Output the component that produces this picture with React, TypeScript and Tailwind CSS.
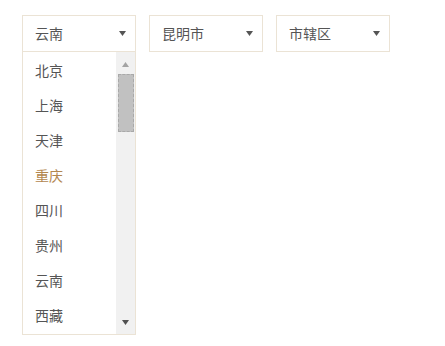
import { useState } from 'react';

const provinces = ['北京', '上海', '天津', '重庆', '四川', '贵州', '云南', '西藏'];

const font = { fontFamily: '"Noto Sans CJK SC", "Noto Sans", sans-serif' };

// Small triangle used in the select boxes and scrollbar
function Caret({ up = false, color = '#555' }: { up?: boolean; color?: string }) {
  return (
    <svg width="7" height="5" viewBox="0 0 7 5" className="block">
      {up ? <path d="M0 5 L3.5 0 L7 5 Z" fill={color} /> : <path d="M0 0 L7 0 L3.5 5 Z" fill={color} />}
    </svg>
  );
}

const SelectBox = ({ value }: { value: string }) => (
  <div className="w-[114px] h-[37px] border border-[#ebe3d5] bg-white flex items-center justify-between pl-[12px] pr-[9px]">
    <span className="text-[14px] text-[#555]">{value}</span>
    <Caret />
  </div>
);

const App = () => {
  const [hovered] = useState('重庆');

  return (
    <div className="min-h-screen bg-white pl-[22px] pt-[15px]" style={font}>
      <div className="flex gap-[13px] items-start">
        {/* Province select with open list */}
        <div className="w-[114px]">
          <SelectBox value="云南" />
          <div className="h-[283px] border border-t-0 border-[#ebe3d5] bg-white flex">
            <ul className="flex-1 pt-[1px]">
              {provinces.map((p) => (
                <li
                  key={p}
                  className={`h-[35px] flex items-center pl-[12px] text-[14px] ${p === hovered ? 'text-[#b3874f]' : 'text-[#555]'}`}
                >
                  {p}
                </li>
              ))}
            </ul>
            {/* Scrollbar */}
            <div className="w-[19px] bg-[#f1f1f1] flex flex-col items-center">
              <div className="h-[22px] flex items-start justify-center pt-[10px]">
                <Caret up color="#a3a3a3" />
              </div>
              <div className="w-[16px] h-[58px] bg-[#c1c1c1] border border-dashed border-[#a9a9a9]" />
              <div className="flex-1" />
              <div className="h-[24px] flex items-start justify-center pt-[10px]">
                <Caret color="#505050" />
              </div>
            </div>
          </div>
        </div>
        <SelectBox value="昆明市" />
        <SelectBox value="市辖区" />
      </div>
    </div>
  );
};

export default App;
